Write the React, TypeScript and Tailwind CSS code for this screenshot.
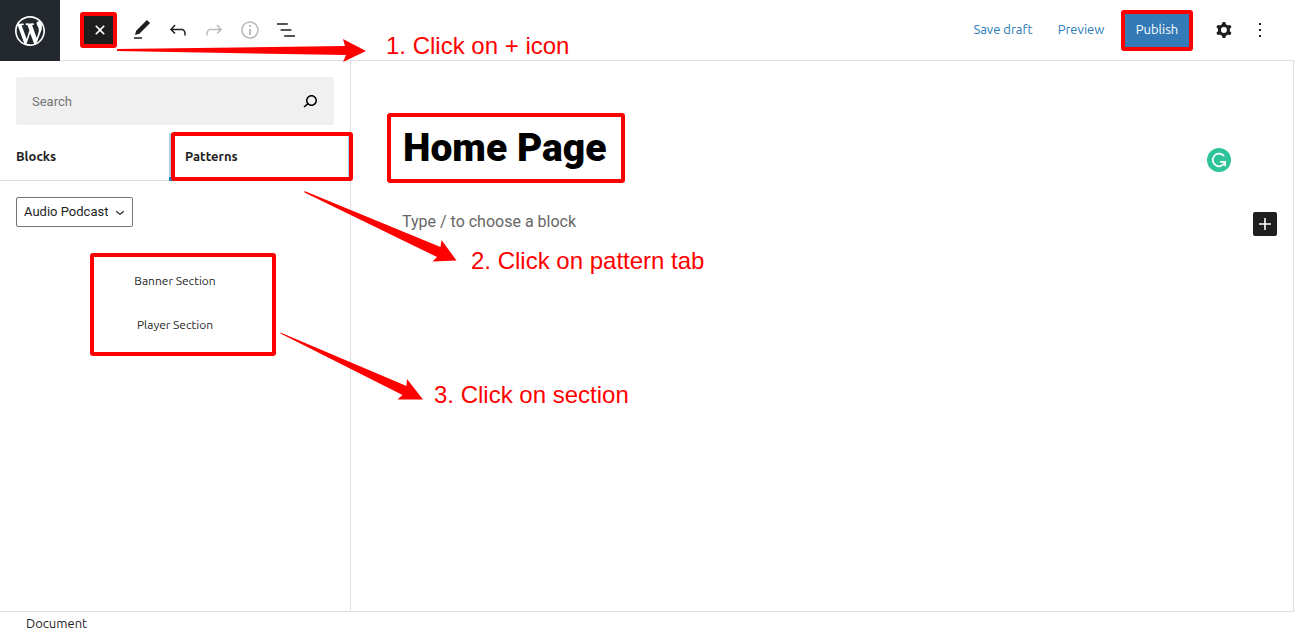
import type { ReactNode } from "react";

const UI = "font-['Ubuntu','Noto_Sans',sans-serif]";

function Icon({ d, className = "size-6" }: { d: string; className?: string }) {
  return (
    <svg viewBox="0 0 24 24" fill="currentColor" fillRule="evenodd" className={className} aria-hidden="true">
      <path d={d} />
    </svg>
  );
}

const PLUS = "M18 11.2h-5.2V6h-1.6v5.2H6v1.6h5.2V18h1.6v-5.2H18z";
const PENCIL = "M20.1 5.1L16.9 2 6.2 12.7l-1.3 4.4 4.5-1.3L20.1 5.1zM4 20.8h8v-1.5H4v1.5z";
const UNDO =
  "M18.3 11.7c-.6-.6-1.4-.9-2.3-.9H6.7l2.9-3.3-1.1-1-4.5 5L8.5 16l1-1-2.7-2.7H16c.5 0 .9.2 1.3.5 1 1 1 3.4 1 4.5v.3h1.5v-.2c0-1.5 0-4.3-1.5-5.7z";
const REDO =
  "M15.6 6.5l-1.1 1 2.9 3.3H8c-.9 0-1.7.3-2.3.9-1.4 1.5-1.4 4.2-1.4 5.6v.2h1.5v-.3c0-1.1 0-3.5 1-4.5.3-.3.7-.5 1.3-.5h9.2L14.5 15l1.1 1.1 4.6-4.6-4.6-5z";
const INFO =
  "M12 3.2c-4.8 0-8.8 3.9-8.8 8.8 0 4.8 3.9 8.8 8.8 8.8 4.8 0 8.8-3.9 8.8-8.8 0-4.8-4-8.8-8.8-8.8zm0 16c-4 0-7.2-3.3-7.2-7.2C4.8 8 8 4.8 12 4.8s7.2 3.3 7.2 7.2c0 4-3.2 7.2-7.2 7.2zM11 17h2v-6h-2v6zm0-8h2V7h-2v2z";
const LIST = "M13.8 5.2H3v1.5h10.8V5.2zm-3.6 12v1.5H21v-1.5H10.2zm7.2-6H6.6v1.5h10.8v-1.5z";
const SEARCH =
  "M13.5 6C10.5 6 8 8.5 8 11.5c0 1.1.3 2.1.9 3l-3.4 3 1 1.1 3.4-2.9c1 .9 2.2 1.4 3.6 1.4 3 0 5.5-2.5 5.5-5.5C19 8.5 16.5 6 13.5 6zm0 9.5c-2.2 0-4-1.8-4-4s1.8-4 4-4 4 1.8 4 4-1.8 4-4 4z";
const CHEVRON = "M17.5 11.6L12 16l-5.5-4.4.9-1.2L12 14l4.5-3.6 1 1.2z";
const COG =
  "M10.289 4.836A1 1 0 0111.275 4h1.306a1 1 0 01.987.836l.244 1.466c.787.26 1.503.679 2.108 1.218l1.393-.522a1 1 0 011.216.437l.653 1.13a1 1 0 01-.23 1.273l-1.148.944a6.025 6.025 0 010 2.435l1.149.946a1 1 0 01.23 1.272l-.653 1.13a1 1 0 01-1.216.437l-1.394-.522c-.605.54-1.32.958-2.108 1.218l-.244 1.466a1 1 0 01-.987.836h-1.306a1 1 0 01-.986-.836l-.244-1.466a5.995 5.995 0 01-2.108-1.218l-1.394.522a1 1 0 01-1.217-.436l-.653-1.131a1 1 0 01.23-1.272l1.149-.946a6.026 6.026 0 010-2.435l-1.148-.944a1 1 0 01-.23-1.272l.653-1.131a1 1 0 011.217-.437l1.393.522a5.994 5.994 0 012.108-1.218l.244-1.466zM14.929 12a3 3 0 11-6 0 3 3 0 016 0z";
const DOTS = "M13 19h-2v-2h2v2zm0-6h-2v-2h2v2zm0-6h-2V5h2v2z";
const WORDPRESS =
  "M20 10c0-5.51-4.49-10-10-10C4.48 0 0 4.49 0 10c0 5.52 4.48 10 10 10 5.51 0 10-4.48 10-10zM7.78 15.37L4.37 6.22c.55-.02 1.17-.08 1.17-.08.5-.06.44-1.13-.06-1.11 0 0-1.45.11-2.37.11-.18 0-.37 0-.58-.01C4.12 2.69 6.87 1.11 10 1.11c2.33 0 4.45.87 6.05 2.34-.68-.11-1.65.39-1.65 1.58 0 .74.45 1.36.9 2.1.35.61.55 1.36.55 2.46 0 1.49-1.4 5-1.4 5l-3.03-8.37c.54-.02.82-.17.82-.17.5-.05.44-1.25-.06-1.22 0 0-1.44.12-2.38.12-.87 0-2.33-.12-2.33-.12-.5-.03-.56 1.2-.06 1.22l.92.08 1.26 3.41zM17.41 10c.24-.64.74-1.87.43-4.25.7 1.29 1.05 2.71 1.05 4.25 0 3.29-1.73 6.24-4.4 7.78.97-2.59 1.94-5.2 2.92-7.78zM6.1 18.09C3.12 16.65 1.11 13.53 1.11 10c0-1.3.23-2.48.72-3.59C3.25 10.3 4.67 14.2 6.1 18.09zm4.03-6.63l2.58 6.98c-.86.29-1.76.45-2.71.45-.79 0-1.57-.11-2.29-.33.81-2.38 1.62-4.74 2.42-7.1z";

function ToolButton({ label, d, disabled }: { label: string; d: string; disabled?: boolean }) {
  return (
    <button
      type="button"
      aria-label={label}
      disabled={disabled}
      className="flex size-9 items-center justify-center text-[#1e1e1e] disabled:text-[#bbbbbb]"
    >
      <Icon d={d} />
    </button>
  );
}

/* Red frame drawn over the element it is nested in. */
function Frame({ className }: { className: string }) {
  return <span aria-hidden="true" className={`pointer-events-none absolute z-10 rounded-[3px] border-4 border-[#ff0000] ${className}`} />;
}

function Note({ className, children }: { className: string; children: ReactNode }) {
  return (
    <p className={`absolute z-20 whitespace-nowrap font-['Liberation_Sans',sans-serif] text-2xl leading-7 text-[#ff0000] ${className}`}>
      {children}
    </p>
  );
}

function Header() {
  return (
    <header className="flex h-[61px] shrink-0 items-start border-b border-[#e0e0e0]">
      <a href="#" aria-label="View pages" className="flex h-[61px] w-[60px] shrink-0 items-center justify-center bg-[#23282e] text-white">
        <svg viewBox="-2 -2 24 24" fill="currentColor" className="size-9" aria-hidden="true">
          <path d={WORDPRESS} />
        </svg>
      </a>
      <div className="flex h-[60px] flex-1 items-center pr-4 pl-6">
        <div className="relative mr-2">
          <button type="button" aria-label="Close block inserter" className="flex size-8 items-center justify-center bg-[#1e1e1e] text-white">
            <Icon d={PLUS} className="size-6 rotate-45" />
          </button>
          <Frame className="-inset-y-0.5 -right-px -left-1" />
        </div>
        <ToolButton label="Tools" d={PENCIL} />
        <ToolButton label="Undo" d={UNDO} />
        <ToolButton label="Redo" d={REDO} disabled />
        <ToolButton label="Details" d={INFO} disabled />
        <ToolButton label="List view" d={LIST} />
        <div className={`ml-auto flex items-center text-[13px] text-[#2a7ab8] ${UI}`}>
          <button type="button" className="h-9 w-[84px] whitespace-nowrap">Save draft</button>
          <button type="button" className="h-9 w-[72px]">Preview</button>
          <div className="relative mr-[17px] ml-2">
            <button type="button" className="h-9 w-16 bg-[#337ab7] text-white">Publish</button>
            <Frame className="-top-0.5 -right-1 -bottom-[3px] -left-1" />
          </div>
        </div>
        <ToolButton label="Settings" d={COG} />
        <ToolButton label="Options" d={DOTS} />
      </div>
    </header>
  );
}

function Inserter() {
  return (
    <aside className="relative w-[351px] shrink-0 border-r border-[#e0e0e0]">
      <div className="p-4 pb-2">
        <label className="flex h-12 items-center rounded-xs bg-[#f0f0f0] pr-3 pl-4">
          <input
            type="search"
            aria-label="Search"
            placeholder="Search"
            className="h-[22px] min-w-0 flex-1 bg-transparent font-['Roboto',sans-serif] text-[13px] outline-none placeholder:text-[#757575]"
          />
          <Icon d={SEARCH} />
        </label>
      </div>
      <div role="tablist" className={`flex h-12 border-b border-[#dddddd] text-[13px] font-semibold text-[#1e1e1e] ${UI}`}>
        <button type="button" role="tab" aria-selected="false" className="w-[169px] pl-4 text-left">
          Blocks
        </button>
        <div className="relative -mb-px flex-1 border-x-2 border-x-[#a6cfe8]">
          <button type="button" role="tab" aria-selected="true" className="h-full w-full pl-3.5 text-left">
            Patterns
          </button>
          <span aria-hidden="true" className="absolute -inset-x-0.5 bottom-0 h-1 bg-[#2a7ab8]" />
          <Frame className="-top-px -right-[5px] bottom-0 left-0" />
        </div>
      </div>
      <div className="px-4 pt-4">
        <div className="relative w-[117px] font-['Roboto',sans-serif] text-[13px] text-[#1e1e1e]">
          <select aria-label="Pattern category" className="h-[30px] w-full appearance-none rounded-xs border border-[#757575] bg-white pr-6 pl-[7px]">
            <option>Audio Podcast</option>
          </select>
          <Icon d={CHEVRON} className="pointer-events-none absolute top-1.5 right-1 size-[18px]" />
        </div>
      </div>
      <div className="px-4 pt-[26px]">
        <div className={`relative ml-[74px] w-[186px] text-[12px] text-[#1e1e1e] ${UI}`}>
          <Frame className="inset-0" />
          <ul className="flex flex-col px-4 pt-1.5 pb-[9px] text-center">
            <li>
              <button type="button" className="h-11 w-full pr-4">Banner Section</button>
            </li>
            <li>
              <button type="button" className="h-11 w-full pr-4">Player Section</button>
            </li>
          </ul>
        </div>
      </div>
    </aside>
  );
}

function Editor() {
  return (
    <main className="flex-1 border-r border-[#e0e0e0] pt-[52px] pr-4 pl-9 font-['Roboto',sans-serif]">
      <div className="flex items-center justify-between pr-[46px]">
        <div className="relative py-3 pr-[18px] pl-4">
          <h1 className="text-[39px] leading-[46px] font-black text-black">Home Page</h1>
          <Frame className="inset-0" />
        </div>
        <svg viewBox="0 0 24 24" className="mt-6 size-6" role="img" aria-label="Grammarly">
          <circle cx="12" cy="12" r="12" fill="#2fc39a" />
          <path d="M16.6 7.6A6.3 6.3 0 1 0 18 14" fill="none" stroke="#fff" strokeWidth="1.7" strokeLinecap="round" />
          <path d="M13 13.9h5.2v4.4" fill="none" stroke="#fff" strokeWidth="1.7" />
        </svg>
      </div>
      <div className="mt-6 flex items-start pl-[15px]">
        <input
          type="text"
          aria-label="Add block"
          placeholder="Type / to choose a block"
          className="h-7 min-w-0 flex-1 text-base outline-none placeholder:text-[#666666]"
        />
        <button type="button" aria-label="Insert block" className="mt-[5px] flex size-6 items-center justify-center rounded-xs bg-[#1e1e1e] text-white">
          <Icon d={PLUS} />
        </button>
      </div>
    </main>
  );
}

export default function App() {
  return (
    <div className="relative flex min-h-screen flex-col bg-white">
      <Header />
      <div className="flex flex-1">
        <Inserter />
        <Editor />
      </div>
      <footer className={`flex h-[25px] shrink-0 items-center border-t border-[#e0e0e0] pl-[26px] text-[13px] text-[#1e1e1e] ${UI}`}>
        Document
      </footer>

      <svg viewBox="0 0 480 410" fill="#ff0000" className="pointer-events-none absolute top-0 left-0 z-20 h-[410px] w-[480px]" aria-hidden="true">
        <path d="M117 49L345 46L343 39L366 51L343 62L346 55L117 51z" />
        <path d="M304.500 191L440.500 247L441.500 240L456.500 260.500L432.500 261.500L437 257L304.500 192.500z" />
        <path d="M280.500 332.500L406.500 386L407 379L423 399.500L397.500 399.500L402.500 395L280.500 333.500z" />
      </svg>
      <Note className="top-8 left-[386px]">1. Click on + icon</Note>
      <Note className="top-[247px] left-[471px]">2. Click on pattern tab</Note>
      <Note className="top-[381px] left-[434px]">3. Click on section</Note>
    </div>
  );
}
